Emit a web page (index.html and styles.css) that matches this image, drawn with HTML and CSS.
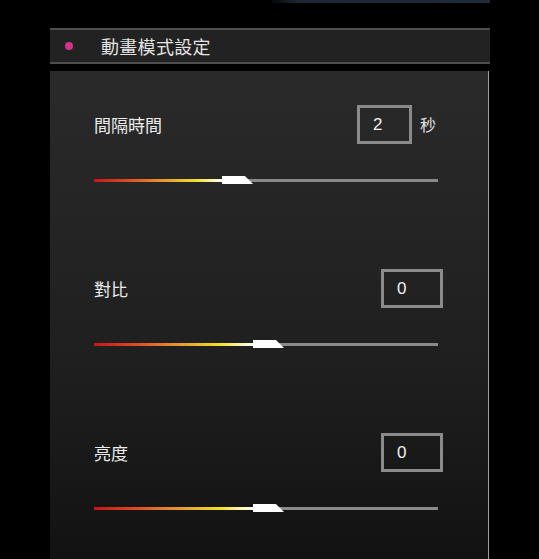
FILE: index.html
```html
<!DOCTYPE html>
<html lang="zh-Hant">
<head>
<meta charset="utf-8">
<title>動畫模式設定</title>
<link rel="stylesheet" href="styles.css">
</head>
<body>
<div class="topstrip"></div>
<div class="header">
  <span class="dot"></span>
  <span class="title">動畫模式設定</span>
</div>
<div class="panel">
  <div class="row">
    <div class="row-head first">
      <span class="label">間隔時間</span>
      <span class="group"><span class="box box-sm">2</span><span class="unit">秒</span></span>
    </div>
    <div class="slider">
      <div class="track"></div>
      <div class="fill" style="width:132px"></div>
      <div class="thumb" style="left:128px"></div>
    </div>
  </div>
  <div class="row">
    <div class="row-head">
      <span class="label">對比</span>
      <span class="box">0</span>
    </div>
    <div class="slider">
      <div class="track"></div>
      <div class="fill" style="width:163px"></div>
      <div class="thumb" style="left:159px"></div>
    </div>
  </div>
  <div class="row">
    <div class="row-head">
      <span class="label">亮度</span>
      <span class="box">0</span>
    </div>
    <div class="slider">
      <div class="track"></div>
      <div class="fill" style="width:163px"></div>
      <div class="thumb" style="left:159px"></div>
    </div>
  </div>
</div>
</body>
</html>
```
FILE: styles.css
```css
html, body {
  margin: 0;
  padding: 0;
  background: #000;
  height: 559px;
  overflow: hidden;
  font-family: "Noto Sans CJK TC", "Noto Sans", sans-serif;
  color: #e6e6e6;
}
.topstrip {
  margin-left: 272px;
  width: 218px;
  height: 3px;
  background: linear-gradient(90deg, #05070a 0%, #1d2834 12%, #1f2b37 100%);
}
.header {
  margin: 25px 0 0 50px;
  width: 440px;
  height: 32px;
  box-sizing: content-box;
  border-top: 2px solid #4e4e4e;
  border-bottom: 2px solid #4e4e4e;
  background: #222;
  display: flex;
  align-items: center;
}
.dot {
  width: 8px;
  height: 8px;
  border-radius: 50%;
  background: #d4308e;
  margin-left: 15px;
}
.title {
  margin-left: 28px;
  font-size: 18px;
  line-height: 24px;
  color: #e4e4e4;
  letter-spacing: 0.3px;
}
.panel {
  margin: 7px 0 0 50px;
  width: 439px;
  height: 488px;
  overflow: hidden;
  border-right: 1px solid #a0a0a0;
  background: linear-gradient(180deg, #2a2a2a 0%, #1f1f1f 60%, #121212 100%);
  padding: 34px 0 0 44px;
  box-sizing: border-box;
}
.row {
  width: 349px;
  height: 164px;
  display: flex;
  flex-direction: column;
}
.row:last-child {
  height: auto;
}
.row-head {
  display: flex;
  justify-content: space-between;
  align-items: center;
  height: 39px;
}
.row-head.first {
  padding-right: 7px;
}
.label {
  font-size: 17px;
  color: #ececec;
  margin-top: -1px;
}
.group {
  display: flex;
  align-items: center;
  gap: 8px;
}
.unit {
  font-size: 16px;
  color: #e0e0e0;
  margin-top: -2px;
}
.box {
  width: 62px;
  height: 39px;
  box-sizing: border-box;
  border: 3px solid #8b8b8b;
  padding-left: 13px;
  font-family: "Liberation Sans", Arial, sans-serif;
  font-size: 17px;
  line-height: 33px;
  color: #f0f0f0;
}
.box-sm {
  width: 55px;
}
.slider {
  position: relative;
  width: 344px;
  height: 8px;
  margin-top: 32px;
}
.track {
  position: absolute;
  left: 0;
  top: 3px;
  width: 344px;
  height: 3px;
  background: #8a8a8a;
}
.fill {
  position: absolute;
  left: 0;
  top: 3px;
  height: 3px;
  background: linear-gradient(90deg, #c8141a 0%, #dc4a22 25%, #e8902e 50%, #f4e02a 78%, #fbf8c8 92%, #ffffff 100%);
}
.thumb {
  position: absolute;
  top: 0;
  width: 31px;
  height: 8px;
  background: #fff;
  clip-path: polygon(0 0, 74% 0, 100% 100%, 0 100%);
}
```
